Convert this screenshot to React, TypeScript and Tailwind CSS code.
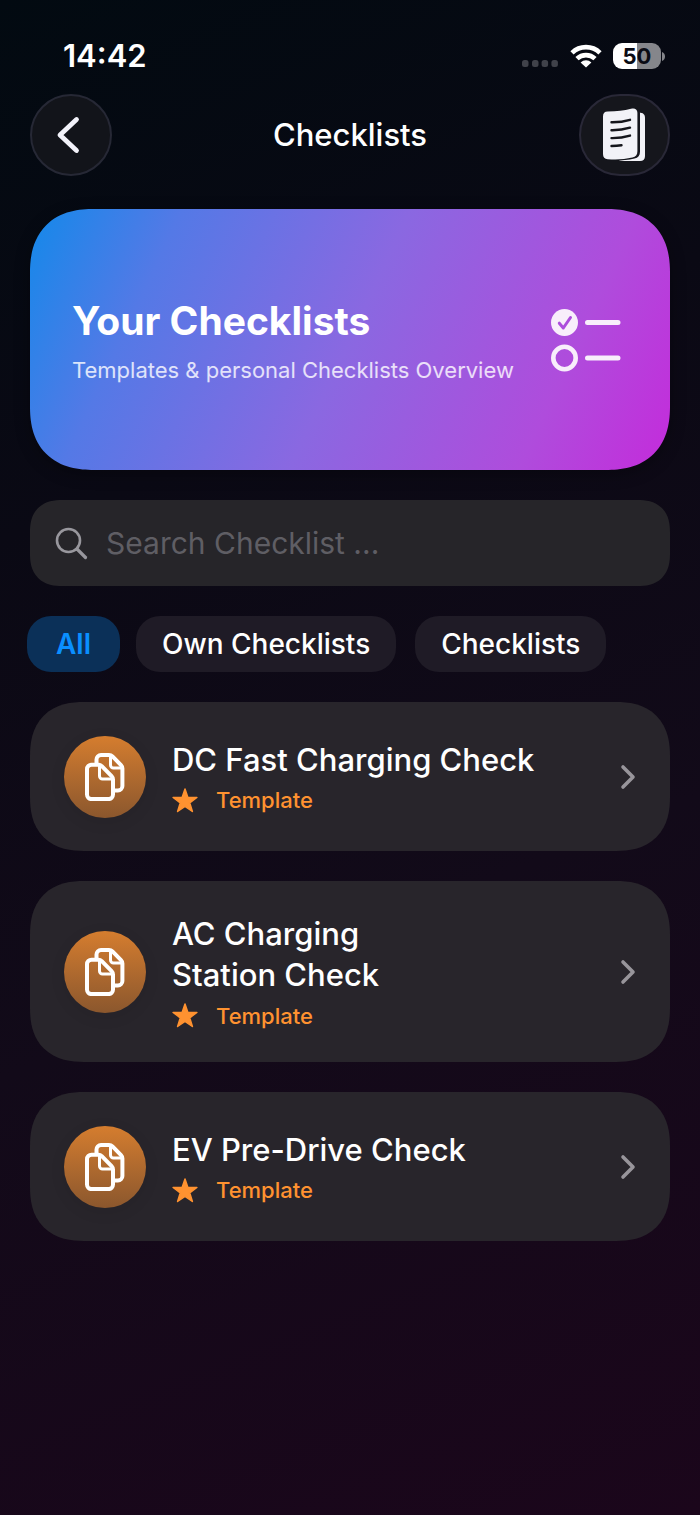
import { useState } from "react";

type Checklist = { title: string; kind: string };

const checklists: Checklist[] = [
  { title: "DC Fast Charging Check", kind: "Template" },
  { title: "AC Charging\nStation Check", kind: "Template" },
  { title: "EV Pre-Drive Check", kind: "Template" },
];

const filters = ["All", "Own Checklists", "Checklists"];

function StatusBar() {
  return (
    <div className="flex items-center justify-between pr-[5px] pl-[33px]">
      <span className="text-[31px] leading-10 font-semibold">14:42</span>
      <div className="flex items-center gap-[11px]">
        <svg width="38" height="28" viewBox="0 0 38 28" fill="#40424a" aria-hidden="true">
          <rect x="1" y="18" width="6.5" height="7" rx="2.5" />
          <rect x="11" y="18" width="6.5" height="7" rx="2.5" />
          <rect x="20.6" y="18" width="6.5" height="7" rx="2.5" />
          <rect x="30.4" y="18" width="6.5" height="7" rx="2.5" />
        </svg>
        <svg width="32" height="24" viewBox="0 0 32 24" aria-hidden="true">
          <g fill="none" stroke="#fff" strokeWidth="4.6">
            <path d="M2 8.800a20 20 0 0 1 28 0" />
            <path d="M7 14.700a13 13 0 0 1 18 0" />
          </g>
          <path d="M16 23.600 10.600 18.400a8 8 0 0 1 10.800 0Z" fill="#fff" />
        </svg>
        <div className="flex items-center gap-px">
          <div className="flex h-[26px] w-12 items-center justify-center rounded-[9px] bg-linear-to-r from-white from-50% to-[#85868b] to-50% text-[22px] leading-none font-bold text-[#0a0b14]">
            50
          </div>
          <svg width="3" height="9" viewBox="0 0 3 9" aria-hidden="true">
            <path d="M0 0C4 1.5 4 7.5 0 9Z" fill="#85868b" />
          </svg>
        </div>
      </div>
    </div>
  );
}

function DocumentsIcon() {
  return (
    <svg width="44" height="54" viewBox="0 0 44 54" className="mr-0.5" aria-hidden="true">
      <path d="M37 4.600c4 .2 6 1.900 6 5.400V48c0 3.200-1.700 5-4.900 5H22c-3 0-5.500-.8-7-2Z" fill="#f2f2f7" />
      <path
        d="M5.600 3.600C15 3.400 24 2.600 31.500.6c4-1 6.500.7 6.500 4.400v38.500c0 4-1.800 6.200-5.500 7.100-8.500 2-18 2.300-27 1.700C2 52 0 50 0 46.500V9c0-3.500 2-5.300 5.600-5.400Z"
        fill="#15161c"
      />
      <path
        d="M5.700 3.600C15 3.400 22 2.500 29 .7c4-1 6.400.5 6.400 4.100v38.400c0 3.600-1.600 5.600-5 6.400-8 1.900-16 2.100-24.700 1.600C2.600 51 1 49.200 1 46V8.500c0-3.200 1.600-4.800 4.700-4.900Z"
        fill="#f2f2f7"
      />
      <g fill="none" stroke="#15161c" strokeWidth="2.400" strokeLinecap="round">
        <path d="M9.500 14.300c7 .1 13-.8 18.500-2.500" />
        <path d="M9.500 22.200c7 .1 13-.8 18.500-2.500" />
        <path d="M9.500 30.100c7 .1 13-.8 18.500-2.500" />
        <path d="M9.500 38c4 0 7-.3 10-.8" />
      </g>
    </svg>
  );
}

function Header() {
  return (
    <header className="mt-[18px] flex items-center justify-between">
      <div className="flex flex-1">
        <button
          aria-label="Back"
          className="flex size-[82px] items-center justify-center rounded-full border-2 border-[#262835] bg-[#12141a]"
        >
          <svg width="24" height="38" viewBox="0 0 24 38" fill="none" stroke="#f2f2fa" strokeWidth="4.800" strokeLinecap="round" strokeLinejoin="round" className="mr-1.5" aria-hidden="true">
            <path d="M20.500 3.500 4 19l16.500 15.500" />
          </svg>
        </button>
      </div>
      <h1 className="text-[31px] leading-10 font-medium">Checklists</h1>
      <div className="flex flex-1 justify-end">
        <button
          aria-label="Documents"
          className="flex h-[82px] w-[91px] items-center justify-center rounded-full border-2 border-[#292837] bg-[#15161c]"
        >
          <DocumentsIcon />
        </button>
      </div>
    </header>
  );
}

function Hero() {
  return (
    <section className="mt-[33px] flex h-[261px] items-center justify-between rounded-[54px] bg-linear-[115deg,#1389ea_0%,#5479e6_20%,#8a68e1_50%,#af4cdc_80%,#c42bdb_100%] pr-12 pl-[42px] shadow-[0_4px_16px_rgba(0,0,0,0.3)] supports-[corner-shape:squircle]:rounded-[64px] supports-[corner-shape:squircle]:[corner-shape:superellipse(1.25)]">
      <div>
        <h2 className="mt-[3px] text-[39px] leading-12 font-bold">Your Checklists</h2>
        <p className="mt-[9px] text-[22px] leading-8 text-white/80">Templates &amp; personal Checklists Overview</p>
      </div>
      <svg width="72" height="66" viewBox="0 0 72 66" fill="none" aria-hidden="true">
        <circle cx="14.500" cy="15.500" r="13.500" fill="#f8eefb" />
        <path d="m9.300 16.200 4 4.800 7.200-10.500" stroke="#ad4ddd" strokeWidth="3" strokeLinecap="round" strokeLinejoin="round" />
        <circle cx="14.500" cy="51" r="11.200" stroke="#f8eefb" strokeWidth="4.600" />
        <path d="M37.500 15.500h30.500M37.500 51h30.500" stroke="#f8eefb" strokeWidth="5" strokeLinecap="round" />
      </svg>
    </section>
  );
}

function SearchField() {
  return (
    <label className="mt-[30px] flex h-[86px] items-center gap-[18px] rounded-[28px] bg-[#262529] px-[25px] supports-[corner-shape:squircle]:rounded-[32px] supports-[corner-shape:squircle]:[corner-shape:superellipse(1.25)]">
      <svg width="33" height="33" viewBox="0 0 33 33" fill="none" stroke="#98979d" strokeLinecap="round" aria-hidden="true">
        <circle cx="13.500" cy="13.500" r="11.500" strokeWidth="2.600" />
        <path d="m22 22 8.500 8.500" strokeWidth="3.200" />
      </svg>
      <input
        type="text"
        aria-label="Search Checklist"
        placeholder="Search Checklist ..."
        className="min-w-0 flex-1 bg-transparent text-[30px] leading-10 text-white outline-none placeholder:text-[#5f5e64]"
      />
    </label>
  );
}

function Filters() {
  const [active, setActive] = useState("All");
  return (
    <nav className="mt-[30px] flex gap-[19px]">
      {filters.map((name) => (
        <button
          key={name}
          onClick={() => setActive(name)}
          className={
            name === active
              ? "-mx-[3px] h-14 rounded-[24px] bg-[#0b3058] px-[29px] text-[28px] font-semibold whitespace-nowrap text-[#0a8fff]"
              : "h-14 rounded-[24px] bg-[#1f1b26] px-[26px] text-[28px] font-medium whitespace-nowrap text-white"
          }
        >
          {name}
        </button>
      ))}
    </nav>
  );
}

function CopyIcon() {
  return (
    <svg width="40" height="48" viewBox="0 0 40 48" fill="none" stroke="#fff" strokeWidth="4" strokeLinejoin="round" strokeLinecap="round" aria-hidden="true">
      <path d="M11.500 10.500V6.500a4.500 4.500 0 0 1 4.500-4.500h8c1.500 0 2.500.4 3.500 1.400l8.500 8.700c1 1 1.400 2 1.400 3.400V33a4.500 4.500 0 0 1-4.500 4.500H30" />
      <path d="M25.500 3v9a3 3 0 0 0 3 3h8" strokeWidth="3" />
      <path d="M6.500 11.700h7c1.300 0 2.300.5 3.300 1.500l9.800 10c1 1 1.400 2 1.400 3.400v15a4.500 4.500 0 0 1-4.500 4.500h-17a4.500 4.500 0 0 1-4.500-4.500V16.200a4.500 4.500 0 0 1 4.500-4.500Z" />
      <path d="M14.500 12.500v10.500a3 3 0 0 0 3 3h10" strokeWidth="3" />
    </svg>
  );
}

function ChecklistCard({ title, kind }: Checklist) {
  return (
    <li>
      <a
        href="#"
        className="flex min-h-[149px] items-center rounded-[46px] bg-[#28252b] px-[34px] py-8 supports-[corner-shape:squircle]:rounded-[54px] supports-[corner-shape:squircle]:[corner-shape:superellipse(1.25)]"
      >
        <span className="flex size-[82px] shrink-0 items-center justify-center rounded-full bg-linear-to-b from-[#d57d2e] to-[#8b572d] shadow-[0_4px_16px_rgba(0,0,0,0.08)]">
          <CopyIcon />
        </span>
        <span className="ml-[26px] flex flex-1 flex-col">
          <span className="text-[31px] leading-[41px] font-medium whitespace-pre-line">{title}</span>
          <span className="mt-[7px] flex h-7 items-center gap-[18px] text-[22px] font-medium text-[#ff9230]">
            <svg width="26" height="26" viewBox="0 0 26 26" fill="#ff9230" stroke="#ff9230" strokeWidth="1.500" strokeLinejoin="round" aria-hidden="true">
              <path d="m13 1 2.900 8.500h9l-7.200 5.300 2.700 8.700-7.400-5.200-7.400 5.200 2.700-8.700L1.100 9.500h9Z" />
            </svg>
            {kind}
          </span>
        </span>
        <svg width="16" height="26" viewBox="0 0 16 26" fill="none" stroke="#98959b" strokeWidth="3.600" strokeLinecap="round" strokeLinejoin="round" aria-hidden="true">
          <path d="m3 3 10 10L3 23" />
        </svg>
      </a>
    </li>
  );
}

export default function App() {
  return (
    <main className="min-h-screen bg-linear-[158deg,#020a11_0%,#0a0914_30%,#120a19_60%,#1b061b_100%] px-[30px] pt-9 pb-16 font-[Inter,sans-serif] text-white">
      <StatusBar />
      <Header />
      <Hero />
      <SearchField />
      <Filters />
      <ul className="mt-[30px] flex flex-col gap-[30px]">
        {checklists.map((item) => (
          <ChecklistCard key={item.title} {...item} />
        ))}
      </ul>
    </main>
  );
}
